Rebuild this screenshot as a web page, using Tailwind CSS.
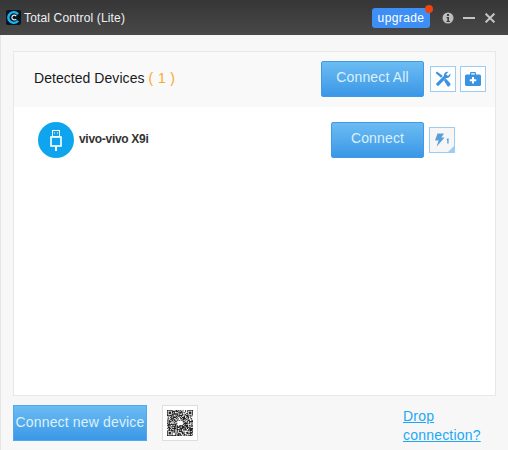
<!DOCTYPE html>
<html lang="en">
<head>
  <meta charset="UTF-8" />
  <title>Total Control (Lite)</title>
  <script src="https://cdn.jsdelivr.net/npm/@tailwindcss/browser@4"></script>
</head>
<body class="w-[508px] h-[450px] overflow-hidden bg-[#f7f7f7] font-['Liberation_Sans',sans-serif]">
  <!-- title bar -->
  <div class="h-[35px] flex items-center bg-gradient-to-b from-[#363636] to-[#484848] text-white">
    <svg class="ml-[6px] w-[15px] h-[15px]" viewBox="0 0 15 15">
      <rect width="15" height="15" rx="2" fill="#06141f"/>
      <path d="M12 4.2A5.4 5.4 0 1 0 12 10.8" fill="none" stroke="#19b5f1" stroke-width="2.4"/>
      <path d="M10.2 6A2.4 2.4 0 1 0 10.2 9" fill="none" stroke="#d8f2fc" stroke-width="1.2"/>
    </svg>
    <span class="ml-[3px] text-[12px] tracking-[0.15px] text-[#eef2f5]">Total Control (Lite)</span>
    <div class="ml-auto mr-[13px] flex items-center">
      <div class="relative w-[58px] h-[20px] rounded-[3px] bg-[#3d8ff5] text-[12px] tracking-[0.4px] leading-[20px] text-center">
        upgrade
        <span class="absolute -top-[3px] -right-[3px] w-[8px] h-[8px] rounded-full bg-[#f0420f]"></span>
      </div>
      <svg class="ml-[12px] w-[12px] h-[12px]" viewBox="0 0 12 12">
        <circle cx="6" cy="6" r="5.5" fill="#bdbdbd"/>
        <rect x="5" y="2" width="2" height="2" fill="#3f3f3f"/>
        <path d="M4.5 5H7V9H8V10H4.5V9H5.3V6H4.5Z" fill="#3f3f3f"/>
      </svg>
      <div class="ml-[9px] w-[12px] h-[2px] bg-[#c4c4c4]"></div>
      <svg class="ml-[10px] w-[10px] h-[10px]" viewBox="0 0 10 10">
        <path d="M.6 .6L9.4 9.4M9.4 .6L.6 9.4" stroke="#c4c4c4" stroke-width="2" fill="none"/>
      </svg>
    </div>
  </div>

  <div class="h-[415px] border-l border-[#e6e6e6] pl-[12px] pr-[12px] pt-[16px]">
    <!-- panel -->
    <div class="w-[483px] h-[345px] border border-[#e8e8e8] bg-white">
      <div class="h-[55px] bg-[#f9f9f9] flex items-center">
        <span class="ml-[20px] pb-[2px] text-[14px] tracking-[0.05px] text-[#1a1a1a]">Detected Devices</span>
        <span class="ml-[4px] pb-[2px] text-[14px] tracking-[0.4px] text-[#f9a825] whitespace-pre">( 1 )</span>
        <div class="ml-auto mr-[9px] pb-[1px] flex items-center">
          <button class="w-[103px] h-[36px] pb-[3px] rounded-[2px] border border-[#3f9be6] bg-gradient-to-b from-[#6bbcf2] to-[#3a97e6] text-[14px] tracking-[0.15px] text-[#dcf0fd]">Connect All</button>
          <div class="ml-[6px] w-[26px] h-[26px] border border-[#9ccdf5] bg-white flex items-center justify-center">
            <svg class="w-[16px] h-[16px]" viewBox="0 0 16 16" fill="#3a93e0">
              <path d="M.8 13L9 4.8C8.6 2.6 10.4 .2 13.6 .8L11 3.2L12.9 5.1L15.4 2.6C15.8 5.6 13.4 7.6 11.2 7L3 15.2Z"/>
              <path d="M.6 2L2 .6L7.8 5L6 6.8ZM9 9.4L10.8 7.6L15.4 12.6V14L14 15.4H12.6Z"/>
            </svg>
          </div>
          <div class="ml-[4px] w-[26px] h-[26px] border border-[#9ccdf5] bg-white flex items-center justify-center">
            <svg class="w-[16px] h-[14px]" viewBox="0 0 16 14">
              <path d="M5 3V1.2C5 .5 5.5 0 6.2 0H9.8C10.5 0 11 .5 11 1.2V3H9.8V1.2H6.2V3Z" fill="#3a93e0"/>
              <rect y="2.5" width="16" height="11.5" rx="1.5" fill="#3a93e0"/>
              <path d="M7 5H9V7.2H11.2V9.2H9V11.4H7V9.2H4.8V7.2H7Z" fill="#fff"/>
            </svg>
          </div>
        </div>
      </div>
      <div class="flex items-center pt-[15px]">
        <div class="ml-[24px] w-[36px] h-[36px] rounded-full bg-[#0fa5ee] flex items-center justify-center">
          <svg class="w-[12px] h-[21px]" viewBox="0 0 12 21" fill="none" stroke="#fff">
            <rect x="2.5" y=".5" width="7" height="6"/>
            <rect x="4" y="2.5" width="1" height="1" fill="#fff" stroke="none"/>
            <rect x="7" y="2.5" width="1" height="1" fill="#fff" stroke="none"/>
            <rect x="1" y="7" width="10" height="9" stroke-width="1.6"/>
            <path d="M6 16V21" stroke-width="2"/>
          </svg>
        </div>
        <span class="ml-[5px] pb-[2px] text-[12px] tracking-[-0.3px] font-bold text-[#333]">vivo-vivo X9i</span>
        <div class="ml-auto mr-[40px] flex items-center">
          <button class="w-[93px] h-[36px] pb-[3px] rounded-[2px] border border-[#3f9be6] bg-gradient-to-b from-[#6bbcf2] to-[#3a97e6] text-[14px] tracking-[0.15px] text-[#dcf0fd]">Connect</button>
          <div class="relative ml-[5px] w-[26px] h-[26px] border border-[#9ccdf5] bg-[#f6f6f6] flex items-center justify-center">
            <svg class="w-[18px] h-[14px]" viewBox="0 0 18 14" fill="#5a9fd8">
              <path d="M4.5 .5H11L8.4 4.4H11.6L3.6 13.8L5.6 7.4H2Z"/>
              <path d="M13.4 6.2L15.6 5V10.6H14.2V7.2Z"/>
            </svg>
            <svg class="absolute right-0 bottom-0 w-[6px] h-[6px]" viewBox="0 0 6 6"><path d="M6 0V6H0Z" fill="#9ccdf5"/></svg>
          </div>
        </div>
      </div>
    </div>

    <!-- footer -->
    <div class="flex items-start pt-[9px]">
      <button class="w-[134px] h-[36px] pb-[2px] border border-[#52a8ea] bg-gradient-to-b from-[#6bbcf2] to-[#3a97e6] text-[14px] tracking-[0.15px] whitespace-nowrap text-[#dcf0fd]">Connect new device</button>
      <div class="ml-[15px] w-[36px] h-[36px] border border-[#dedede] bg-white flex items-center justify-center">
        <svg id="qr" class="w-[26px] h-[26px]" viewBox="0 0 33 33"></svg>
      </div>
      <a href="#" class="ml-[205px] w-[90px] mt-[2px] text-[14px] tracking-[0.2px] leading-[19px] text-[#1ca8f8] underline">Drop connection?</a>
    </div>
  </div>

  <script>
    // fake qr pattern, seeded so it stays the same
    const qr = document.getElementById("qr");
    let seed = 7, cells = "";
    for (let y = 0; y < 33; y++) {
      for (let x = 0; x < 33; x++) {
        seed = (seed * 16807) % 2147483647;
        const finder = (x < 7 && y < 7) || (x > 25 && y < 7) || (x < 7 && y > 25);
        const centre = x > 12 && x < 20 && y > 13 && y < 19;
        if (centre) continue;
        let on = seed % 100 < 58;
        if (finder) {
          const fx = x > 25 ? x - 26 : x, fy = y > 25 ? y - 26 : y;
          on = fx == 0 || fx == 6 || fy == 0 || fy == 6 || (fx > 1 && fx < 5 && fy > 1 && fy < 5);
        }
        if (on) cells += `M${x} ${y}h1v1h-1z`;
      }
    }
    qr.innerHTML = `<path d="${cells}" fill="#222"/>`;
  </script>
</body>
</html>
